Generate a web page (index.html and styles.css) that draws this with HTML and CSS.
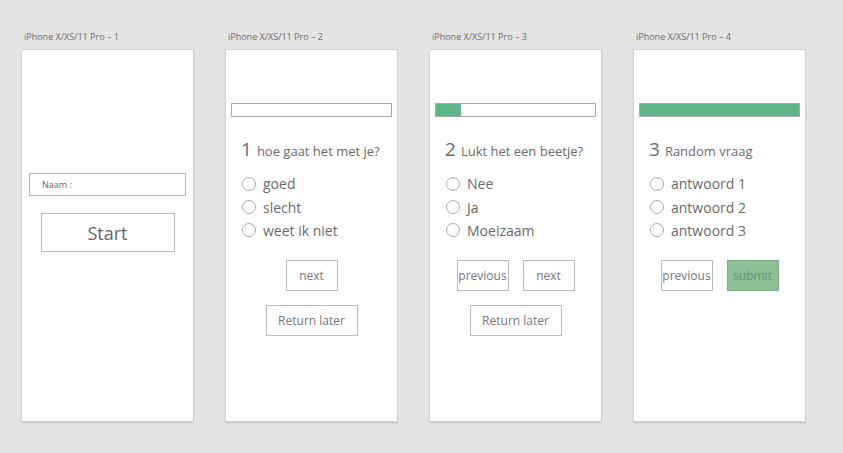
FILE: index.html
```html
<!DOCTYPE html>
<html lang="nl">
<head>
<meta charset="utf-8">
<title>Vragenlijst</title>
<link rel="stylesheet" href="styles.css">
</head>
<body>
<div class="canvas">
  <section class="artboard">
    <div class="label">iPhone X/XS/11 Pro – 1</div>
    <div class="screen screen-start">
      <div class="name-field">Naam :</div>
      <div class="btn btn-start">Start</div>
    </div>
  </section>

  <section class="artboard">
    <div class="label">iPhone X/XS/11 Pro – 2</div>
    <div class="screen">
      <div class="progress"><div class="fill" style="width:0%"></div></div>
      <div class="question"><span class="qnum">1</span><span class="qtext">hoe gaat het met je?</span></div>
      <ul class="options">
        <li><span class="radio"></span>goed</li>
        <li><span class="radio"></span>slecht</li>
        <li><span class="radio"></span>weet ik niet</li>
      </ul>
      <div class="nav">
        <div class="btn btn-small">next</div>
      </div>
      <div class="btn btn-later">Return later</div>
    </div>
  </section>

  <section class="artboard">
    <div class="label">iPhone X/XS/11 Pro – 3</div>
    <div class="screen">
      <div class="progress"><div class="fill" style="width:16%"></div></div>
      <div class="question"><span class="qnum">2</span><span class="qtext">Lukt het een beetje?</span></div>
      <ul class="options">
        <li><span class="radio"></span>Nee</li>
        <li><span class="radio"></span>Ja</li>
        <li><span class="radio"></span>Moeizaam</li>
      </ul>
      <div class="nav">
        <div class="btn btn-small">previous</div>
        <div class="btn btn-small">next</div>
      </div>
      <div class="btn btn-later">Return later</div>
    </div>
  </section>

  <section class="artboard">
    <div class="label">iPhone X/XS/11 Pro – 4</div>
    <div class="screen">
      <div class="progress"><div class="fill" style="width:100%"></div></div>
      <div class="question"><span class="qnum">3</span><span class="qtext">Random vraag</span></div>
      <ul class="options">
        <li><span class="radio"></span>antwoord 1</li>
        <li><span class="radio"></span>antwoord 2</li>
        <li><span class="radio"></span>antwoord 3</li>
      </ul>
      <div class="nav">
        <div class="btn btn-small">previous</div>
        <div class="btn btn-small btn-submit">submit</div>
      </div>
    </div>
  </section>
</div>
</body>
</html>
```

FILE: styles.css
```css
html, body {
  margin: 0;
  padding: 0;
  background: #e4e4e4;
  font-family: "Open Sans", "Noto Sans", sans-serif;
  color: #6b6b6b;
}

.canvas {
  display: flex;
  gap: 31px;
  padding: 31px 0 0 21px;
  height: 453px;
  box-sizing: border-box;
}

.artboard {
  width: 173px;
  display: flex;
  flex-direction: column;
}

.label {
  font-size: 9px;
  line-height: 12px;
  height: 12px;
  margin: 0 0 6px 3px;
  color: #6e6e6e;
  white-space: nowrap;
}

.screen {
  box-sizing: border-box;
  height: 373px;
  background: #fff;
  border: 1px solid #d2d2d2;
  box-shadow: 0 1px 1px rgba(0, 0, 0, 0.12);
  display: flex;
  flex-direction: column;
  padding: 53px 5px 0 5px;
}

.screen-start {
  padding: 123px 7px 0 7px;
  align-items: stretch;
}

.name-field {
  box-sizing: border-box;
  height: 23px;
  border: 1px solid #b4b4b4;
  padding-left: 12px;
  font-size: 9px;
  line-height: 21px;
  color: #666;
}

.btn {
  box-sizing: border-box;
  border: 1px solid #bcbcbc;
  background: #fff;
  color: #777;
  display: flex;
  align-items: center;
  justify-content: center;
  white-space: nowrap;
}

.btn-start {
  align-self: center;
  width: 134px;
  height: 39px;
  margin-top: 17px;
  font-size: 18px;
  color: #666;
}

.progress {
  box-sizing: border-box;
  height: 14px;
  border: 1px solid #a9a9a9;
  background: #fff;
}

.fill {
  height: 100%;
  background: #5fb689;
}

.question {
  display: flex;
  align-items: baseline;
  margin: 20px 0 0 10px;
  line-height: 24px;
}

.qnum {
  font-size: 19px;
  margin-right: 5px;
}

.qtext {
  font-size: 13px;
}

.options {
  list-style: none;
  margin: 9px 0 0 11px;
  padding: 0;
}

.options li {
  display: flex;
  align-items: center;
  height: 23.4px;
  font-size: 14px;
}

.radio {
  box-sizing: border-box;
  width: 14px;
  height: 14px;
  border: 1px solid #ababab;
  border-radius: 50%;
  margin-right: 7px;
  flex: none;
}

.nav {
  display: flex;
  justify-content: center;
  gap: 14px;
  margin-top: 18px;
}

.btn-small {
  width: 52px;
  height: 31px;
  font-size: 12px;
}

.btn-submit {
  background: #8dbf97;
  border-color: #7aab85;
  color: #6a9572;
}

.btn-later {
  align-self: center;
  width: 92px;
  height: 31px;
  margin-top: 14px;
  font-size: 12px;
}
```
